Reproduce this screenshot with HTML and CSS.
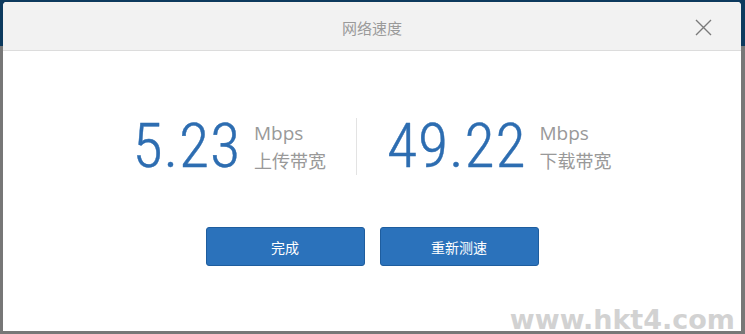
FILE: index.html
```html
<!DOCTYPE html>
<html lang="zh-CN">
<head>
<meta charset="utf-8">
<title>网络速度</title>
<link rel="stylesheet" href="styles.css">
</head>
<body>
<div class="screen">
  <div class="dialog">
    <header class="dlg-head">
      <span class="spacer"></span>
      <h1 class="dlg-title">网络速度</h1>
      <button class="dlg-close" aria-label="关闭">
        <svg width="17" height="17" viewBox="0 0 17 17"><path d="M1 1 L16 16 M16 1 L1 16" stroke="#7a7a7a" stroke-width="1.4" fill="none"/></svg>
      </button>
    </header>
    <div class="dlg-body">
      <div class="stats">
        <div class="stat">
          <span class="num">5.23</span>
          <div class="meta">
            <span class="unit">Mbps</span>
            <span class="label">上传带宽</span>
          </div>
        </div>
        <div class="divider"></div>
        <div class="stat">
          <span class="num">49.22</span>
          <div class="meta">
            <span class="unit">Mbps</span>
            <span class="label">下载带宽</span>
          </div>
        </div>
      </div>
      <div class="actions">
        <button class="btn">完成</button>
        <button class="btn">重新测速</button>
      </div>
    </div>
    <div class="watermark">www.hkt4.com</div>
  </div>
</div>
</body>
</html>
```

FILE: styles.css
```css
html, body {
  margin: 0;
  padding: 0;
}
body {
  width: 745px;
  height: 334px;
  overflow: hidden;
  font-family: "Noto Sans CJK SC", "Liberation Sans", sans-serif;
}
.screen {
  width: 745px;
  height: 334px;
  box-sizing: border-box;
  padding: 2px 4px 3px 3px;
  background: linear-gradient(#0d3a5e 0, #0d3a5e 46px, #777777 46px, #777777 100%);
}
.dialog {
  position: relative;
  height: 329px;
  background: #ffffff;
  border-radius: 4px 4px 0 0;
  overflow: hidden;
}
.dlg-head {
  display: grid;
  grid-template-columns: 1fr auto 1fr;
  align-items: center;
  background: #f2f2f2;
  border-top: 1px solid #f7f3ef;
  border-bottom: 1px solid #dcdcdc;
  box-sizing: border-box;
  height: 49px;
}
.dlg-title {
  margin: 0;
  padding-top: 2px;
  font-size: 15px;
  font-weight: 400;
  line-height: 20px;
  color: #9a9a9a;
}
.dlg-close {
  justify-self: end;
  margin-right: 29px;
  margin-top: 1px;
  padding: 0;
  border: 0;
  background: transparent;
  width: 17px;
  height: 17px;
  display: flex;
}
.dlg-body {
  padding-top: 64px;
  display: flex;
  flex-direction: column;
  align-items: center;
}
.stats {
  display: flex;
  align-items: center;
  gap: 30px;
}
.stat {
  display: flex;
  align-items: center;
  gap: 13px;
}
.num {
  font-family: "Liberation Sans Narrow", "Roboto Condensed", "Liberation Sans", sans-serif;
  font-size: 62px;
  font-weight: 300;
  line-height: 62px;
  color: #2d6db1;
  letter-spacing: 0.8px;
  -webkit-text-stroke: 0.4px #2d6db1;
}
.meta {
  display: flex;
  flex-direction: column;
}
.unit {
  font-family: "Open Sans", "Liberation Sans", sans-serif;
  font-size: 19px;
  line-height: 24px;
  color: #999999;
}
.label {
  margin-top: 3px;
  font-size: 18px;
  line-height: 24px;
  color: #999999;
}
.divider {
  width: 1px;
  height: 57px;
  background: #e3e3e3;
}
.actions {
  margin-top: 50px;
  display: flex;
  gap: 15px;
}
.btn {
  width: 159px;
  height: 39px;
  box-sizing: border-box;
  border: 1px solid #1e5d9e;
  border-radius: 3px;
  background: #2b72bb;
  color: #ffffff;
  font-family: "Noto Sans CJK SC", sans-serif;
  font-size: 14px;
  padding: 0;
}
.watermark {
  position: absolute;
  right: 6px;
  bottom: -2px;
  font-family: "DejaVu Sans", sans-serif;
  font-weight: 700;
  font-size: 27px;
  line-height: 27px;
  color: #d2d2d2;
}
```
